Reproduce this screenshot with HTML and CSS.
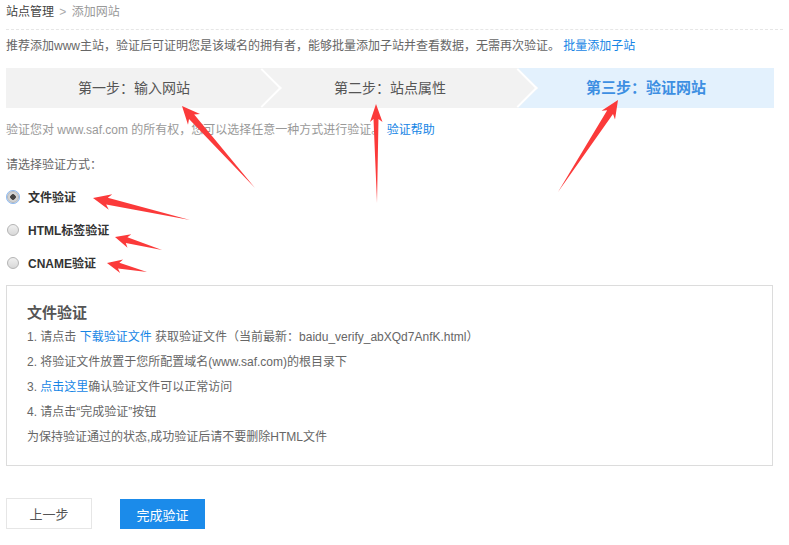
FILE: index.html
```html
<!DOCTYPE html>
<html lang="zh-CN">
  <head>
    <meta charset="UTF-8" />
    <meta name="viewport" content="width=device-width, initial-scale=1.0" />
    <title>添加网站</title>
    <link rel="stylesheet" href="styles.css">
  </head>

  <body>
    <div class="crumb">
      <span class="crumb-root">站点管理</span>
      <span class="crumb-sep">&gt;</span>
      <span class="crumb-cur">添加网站</span>
    </div>

    <p class="intro">推荐添加www主站，验证后可证明您是该域名的拥有者，能够批量添加子站并查看数据，无需再次验证。 <a href="#">批量添加子站</a></p>

    <div class="steps">
      <div class="step">第一步：输入网站</div>
      <div class="step">第二步：站点属性</div>
      <div class="step active">第三步：验证网站</div>
    </div>

    <p class="tip">验证您对 www.saf.com 的所有权，您可以选择任意一种方式进行验证。 <a href="#">验证帮助</a></p>

    <p class="choose">请选择验证方式：</p>

    <div class="methods">
      <label class="method"><input type="radio" name="way" checked><span>文件验证</span></label>
      <label class="method"><input type="radio" name="way"><span>HTML标签验证</span></label>
      <label class="method"><input type="radio" name="way"><span>CNAME验证</span></label>
    </div>

    <div class="panel">
      <h3>文件验证</h3>
      <p>1. 请点击 <a href="#">下载验证文件</a> 获取验证文件（当前最新：baidu_verify_abXQd7AnfK.html）</p>
      <p>2. 将验证文件放置于您所配置域名(www.saf.com)的根目录下</p>
      <p>3. <a href="#">点击这里</a>确认验证文件可以正常访问</p>
      <p>4. 请点击“完成验证”按钮</p>
      <p>为保持验证通过的状态,成功验证后请不要删除HTML文件</p>
    </div>

    <div class="actions">
      <button class="btn-prev">上一步</button>
      <button class="btn-done">完成验证</button>
    </div>

    <!-- 标注箭头 -->
    <svg class="marks" width="789" height="545" viewBox="0 0 789 545">
      <polygon points="182,106 200,114 194.2,114.5 255,188 189,119.1 188,124.8" />
      <polygon points="376,104 382.5,122 378.5,119 377,203 373.5,119 370,122" />
      <polygon points="618,100 615,119.5 613,114 558,192 607.2,110.2 601.5,110.7" />
      <polygon points="93,198 112.3,194.2 107.8,197.8 190,220 106.2,204.6 108.8,209.8" />
      <polygon points="115,237 131.3,234.3 127.4,237.3 162,250 125.8,243.1 127.5,247.7" />
      <polygon points="107,263 123.1,259.5 119.4,262.7 147,272 118,268.5 120.1,273.1" />
    </svg>
  </body>
</html>
```

FILE: styles.css
```css
body {
  margin: 0;
  padding: 0 6px;
  font-family: "Liberation Sans", "Noto Sans CJK SC", sans-serif;
  font-size: 12px;
  color: #666;
  position: relative;
}

a {
  color: #1685e5;
  text-decoration: none;
}

p {
  margin: 0;
}

.crumb {
  line-height: 24px;
  padding-bottom: 5px;
  border-bottom: 1px dashed #e6e6e6;
  color: #999;
}

.crumb .crumb-root {
  color: #444;
}

.crumb .crumb-sep {
  margin: 0 2px;
  color: #aaa;
}

.intro {
  margin-top: 6px;
  line-height: 20px;
}

.steps {
  display: flex;
  margin-top: 12px;
  width: 768px;
}

.step {
  position: relative;
  flex: 1;
  height: 40px;
  line-height: 40px;
  text-align: center;
  font-size: 14px;
  color: #555;
  background: #f2f2f2;
}

.step::after {
  content: "";
  position: absolute;
  right: -14px;
  top: 6px;
  width: 28px;
  height: 28px;
  background: #f2f2f2;
  border-top: 2px solid #fff;
  border-right: 2px solid #fff;
  box-sizing: border-box;
  transform: rotate(45deg);
  z-index: 1;
}

.step.active {
  background: #e3f1fd;
  color: #3d8fe2;
  font-size: 15px;
  font-weight: bold;
}

.step.active::after {
  display: none;
}

.tip {
  margin-top: 12px;
  line-height: 20px;
  color: #999;
}

.choose {
  margin-top: 15px;
  line-height: 20px;
}

.methods {
  margin-top: 5px;
}

.method {
  display: flex;
  align-items: center;
  height: 33px;
  font-weight: bold;
  color: #333;
}

.method input {
  appearance: none;
  -webkit-appearance: none;
  width: 12px;
  height: 12px;
  margin: 0 9px 0 1px;
  border: 1px solid #b4b4b4;
  border-radius: 50%;
  background: linear-gradient(#f0f0f0, #d8d8d8);
  box-sizing: border-box;
}

.method input:checked {
  background: radial-gradient(circle, #444 0 2.5px, #d4d4d4 3px);
  outline: 1px solid #8fbaf0;
  outline-offset: 0;
  box-shadow: 0 0 0 1px #d6e6fb;
}

.panel {
  margin-top: 6px;
  width: 767px;
  padding: 14px 20px 15px;
  border: 1px solid #dcdcdc;
  box-sizing: border-box;
}

.panel h3 {
  margin: 0;
  line-height: 25px;
  font-size: 15px;
  color: #555;
}

.panel p {
  line-height: 25px;
}

.actions {
  display: flex;
  align-items: flex-start;
  gap: 28px;
  margin-top: 32px;
}

.actions button {
  font-family: inherit;
  font-size: 13px;
  cursor: pointer;
  box-sizing: border-box;
}

.btn-prev {
  width: 86px;
  height: 31px;
  background: #fff;
  border: 1px solid #e6e6e6;
  color: #555;
}

.btn-done {
  width: 85px;
  height: 30px;
  margin-top: 1px;
  background: #1b8bea;
  border: none;
  color: #fff;
}

.marks {
  position: absolute;
  left: 0;
  top: 0;
  pointer-events: none;
}

.marks polygon {
  fill: #fb3a3a;
}
```
